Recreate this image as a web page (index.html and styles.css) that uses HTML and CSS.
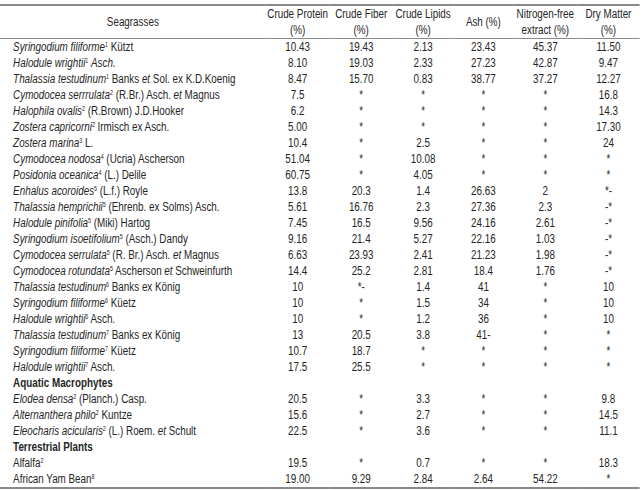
FILE: index.html
```html
<!DOCTYPE html>
<html>
<head>
<meta charset="utf-8">
<link rel="stylesheet" href="styles.css">
</head>
<body>
<div class="frame">
<table class="data">
<colgroup>
<col class="c-name"><col class="c-cp"><col class="c-cf"><col class="c-cl"><col class="c-ash"><col class="c-nfe"><col class="c-dm">
</colgroup>
<thead>
<tr><th class="name-h">Seagrasses</th><th>Crude Protein<br>(%)</th><th>Crude Fiber<br>(%)</th><th>Crude Lipids<br>(%)</th><th>Ash (%)</th><th>Nitrogen-free<br>extract (%)</th><th>Dry Matter<br>(%)</th></tr>
</thead>
<tbody>
<tr><td><i>Syringodium filiforme</i><sup>1</sup> Kützt</td><td>10.43</td><td>19.43</td><td>2.13</td><td>23.43</td><td>45.37</td><td>11.50</td></tr>
<tr><td><i>Halodule wrightii</i><sup>1</sup> <i>Asch.</i></td><td>8.10</td><td>19.03</td><td>2.33</td><td>27.23</td><td>42.87</td><td>9.47</td></tr>
<tr><td><i>Thalassia testudinum</i><sup>1</sup> Banks <i>et</i> Sol. ex K.D.Koenig</td><td>8.47</td><td>15.70</td><td>0.83</td><td>38.77</td><td>37.27</td><td>12.27</td></tr>
<tr><td><i>Cymodocea serrrulata</i><sup>2</sup> (R.Br.) Asch. <i>et</i> Magnus</td><td>7.5</td><td>*</td><td>*</td><td>*</td><td>*</td><td>16.8</td></tr>
<tr><td><i>Halophila ovalis</i><sup>2</sup> (R.Brown) J.D.Hooker</td><td>6.2</td><td>*</td><td>*</td><td>*</td><td>*</td><td>14.3</td></tr>
<tr><td><i>Zostera capricorni</i><sup>2</sup> Irmisch ex Asch.</td><td>5.00</td><td>*</td><td>*</td><td>*</td><td>*</td><td>17.30</td></tr>
<tr><td><i>Zostera marina</i><sup>3</sup> L.</td><td>10.4</td><td>*</td><td>2.5</td><td>*</td><td>*</td><td>24</td></tr>
<tr><td><i>Cymodocea nodosa</i><sup>4</sup> (Ucria) Ascherson</td><td>51.04</td><td>*</td><td>10.08</td><td>*</td><td>*</td><td>*</td></tr>
<tr><td><i>Posidonia oceanica</i><sup>4</sup> (L.) Delile</td><td>60.75</td><td>*</td><td>4.05</td><td>*</td><td>*</td><td>*</td></tr>
<tr><td><i>Enhalus acoroides</i><sup>5</sup> (L.f.) Royle</td><td>13.8</td><td>20.3</td><td>1.4</td><td>26.63</td><td>2</td><td>*-</td></tr>
<tr><td><i>Thalassia hemprichii</i><sup>5</sup> (Ehrenb. ex Solms) Asch.</td><td>5.61</td><td>16.76</td><td>2.3</td><td>27.36</td><td>2.3</td><td>-*</td></tr>
<tr><td><i>Halodule pinifolia</i><sup>5</sup> (Miki) Hartog</td><td>7.45</td><td>16.5</td><td>9.56</td><td>24.16</td><td>2.61</td><td>-*</td></tr>
<tr><td><i>Syringodium isoetifolium</i><sup>5</sup> (Asch.) Dandy</td><td>9.16</td><td>21.4</td><td>5.27</td><td>22.16</td><td>1.03</td><td>-*</td></tr>
<tr><td><i>Cymodocea serrulata</i><sup>5</sup> (R. Br.) Asch. <i>et</i> Magnus</td><td>6.63</td><td>23.93</td><td>2.41</td><td>21.23</td><td>1.98</td><td>-*</td></tr>
<tr><td><i>Cymodocea rotundata</i><sup>5</sup> Ascherson <i>et</i> Schweinfurth</td><td>14.4</td><td>25.2</td><td>2.81</td><td>18.4</td><td>1.76</td><td>-*</td></tr>
<tr><td><i>Thalassia testudinum</i><sup>6</sup> Banks ex König</td><td>10</td><td>*-</td><td>1.4</td><td>41</td><td>*</td><td>10</td></tr>
<tr><td><i>Syringodium filiforme</i><sup>6</sup> Küetz</td><td>10</td><td>*</td><td>1.5</td><td>34</td><td>*</td><td>10</td></tr>
<tr><td><i>Halodule wrightii</i><sup>6</sup> Asch.</td><td>10</td><td>*</td><td>1.2</td><td>36</td><td>*</td><td>10</td></tr>
<tr><td><i>Thalassia testudinum</i><sup>7</sup> Banks ex König</td><td>13</td><td>20.5</td><td>3.8</td><td>41-</td><td>*</td><td>*</td></tr>
<tr><td><i>Syringodium filiforme</i><sup>7</sup> Küetz</td><td>10.7</td><td>18.7</td><td>*</td><td>*</td><td>*</td><td>*</td></tr>
<tr><td><i>Halodule wrightii</i><sup>7</sup> Asch.</td><td>17.5</td><td>25.5</td><td>*</td><td>*</td><td>*</td><td>*</td></tr>
<tr><td class="group">Aquatic Macrophytes</td><td></td><td></td><td></td><td></td><td></td><td></td></tr>
<tr><td><i>Elodea densa</i><sup>2</sup> (Planch.) Casp.</td><td>20.5</td><td>*</td><td>3.3</td><td>*</td><td>*</td><td>9.8</td></tr>
<tr><td><i>Alternanthera philo</i><sup>2</sup> Kuntze</td><td>15.6</td><td>*</td><td>2.7</td><td>*</td><td>*</td><td>14.5</td></tr>
<tr><td><i>Eleocharis acicularis</i><sup>2</sup> (L.) Roem. <i>et</i> Schult</td><td>22.5</td><td>*</td><td>3.6</td><td>*</td><td>*</td><td>11.1</td></tr>
<tr><td class="group">Terrestrial Plants</td><td></td><td></td><td></td><td></td><td></td><td></td></tr>
<tr><td>Alfalfa<sup>2</sup></td><td>19.5</td><td>*</td><td>0.7</td><td>*</td><td>*</td><td>18.3</td></tr>
<tr><td>African Yam Bean<sup>8</sup></td><td>19.00</td><td>9.29</td><td>2.84</td><td>2.64</td><td>54.22</td><td>*</td></tr>
</tbody>
</table>
</div>
</body>
</html>
```
FILE: styles.css
```css
html, body {
  margin: 0;
  padding: 0;
  background: #fff;
  overflow: hidden;
}
body {
  padding-top: 4px;
  font-family: "Liberation Sans", Arial, sans-serif;
  font-size: 12px;
  color: #252525;
}
.frame {
  width: 640px;
  overflow: hidden;
}
/* the source uses a condensed face; emulate it by condensing the table horizontally */
.data {
  width: 780px;
  border-collapse: collapse;
  table-layout: fixed;
  border-top: 2px solid #888;
  border-bottom: 2px solid #888;
  transform: scaleX(0.82);
  transform-origin: 0 0;
}
.c-name { width: 324px; }
.c-cp { width: 78px; }
.c-cf { width: 77px; }
.c-cl { width: 74px; }
.c-ash { width: 73px; }
.c-nfe { width: 78px; }
.c-dm { width: 76px; }
.data th {
  font-weight: normal;
  line-height: 16px;
  height: 32px;
  padding: 0;
  text-align: center;
  vertical-align: middle;
  white-space: nowrap;
  border-bottom: 1px solid #8a8a8a;
}
.data td {
  padding: 0;
  height: 16px;
  line-height: 16px;
  text-align: center;
  vertical-align: middle;
  white-space: nowrap;
}
.data td:first-child {
  text-align: left;
  padding-left: 16px;
}
.data td.group {
  font-weight: bold;
}
sup {
  font-size: 6.5px;
  line-height: 0;
  vertical-align: baseline;
  position: relative;
  top: -4px;
}
```
